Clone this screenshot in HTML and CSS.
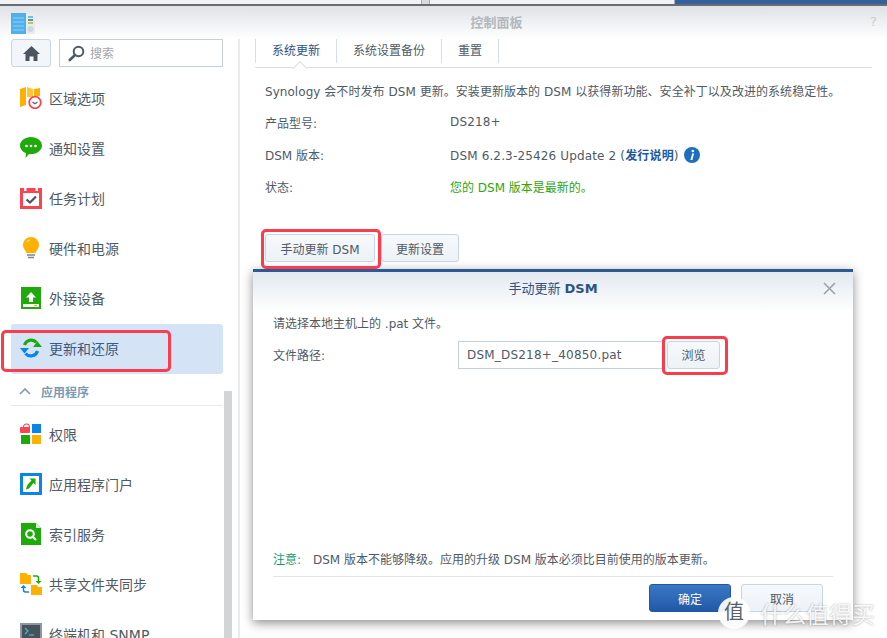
FILE: index.html
```html
<!DOCTYPE html>
<html lang="zh-CN">
<head>
    <meta charset="UTF-8">
    <title>控制面板</title>
    <link rel="stylesheet" href="styles.css">
</head>
<body>
    <div class="top-strip">
        <div class="strip-tab strip-a"></div>
        <div class="strip-tab strip-b"></div>
        <div class="strip-tab strip-c"></div>
        <div class="strip-blue"></div>
    </div>

    <header class="title-bar">
        <svg class="app-icon" width="24" height="24" viewBox="0 0 24 24">
            <rect x="0" y="1" width="15" height="21" fill="#4fb0ea"/>
            <rect x="15" y="1" width="9" height="21" fill="#e8ecef"/>
            <path d="M2 6h11M2 10h11M2 14h11M2 18h11" stroke="#8fd0f4" stroke-width="1"/>
            <path d="M17 5h5" stroke="#45b4e0" stroke-width="1.5"/>
            <path d="M17 8h5" stroke="#5c6670" stroke-width="1.5"/>
            <path d="M17 11h5" stroke="#8cc63f" stroke-width="1.5"/>
            <circle cx="19.500" cy="17" r="3" fill="#cfd6db"/>
        </svg>
        <span class="title-text">控制面板</span>
        <span class="help-mark">?</span>
    </header>

    <div class="window">
        <aside class="sidebar">
            <div class="search-row">
                <button class="home-btn">
                    <svg width="17" height="15" viewBox="0 0 17 15"><path d="M8.500 0 17 8h-2.500v7H10.500v-4.500h-4V15H2.500V8H0z" fill="#4a5560"/></svg>
                </button>
                <div class="search-box">
                    <svg width="17" height="17" viewBox="0 0 17 17"><circle cx="10.500" cy="6.500" r="4.800" fill="none" stroke="#4f5a65" stroke-width="2"/><path d="M7 10 1.800 15" stroke="#4f5a65" stroke-width="2.600" stroke-linecap="round"/></svg>
                    <span>搜索</span>
                </div>
            </div>

            <ul class="nav">
                <li class="nav-item">
                    <svg class="nav-icon" viewBox="0 0 22 22"><path d="M0 2 6 0v18l-6 2z" fill="#ffb000"/><path d="M7 0l6 2v8H7z" fill="#ffc43a"/><path d="M14 2l6-1v8h-6z" fill="#ffb000"/><circle cx="15" cy="15.500" r="5.800" fill="#fff" stroke="#f9454f" stroke-width="1.800"/><path d="M12.500 15l2.500 1.800 2.500-1.800" fill="none" stroke="#555f69" stroke-width="1.100"/></svg>
                    区域选项
                </li>
                <li class="nav-item">
                    <svg class="nav-icon" viewBox="0 0 22 22"><path d="M11 0c6 0 11 3.800 11 8.600 0 4.800-5 8.600-11 8.600l-2-.1L5.500 21l.5-4.700C2.400 14.900 0 12 0 8.600 0 3.800 5 0 11 0z" fill="#1eaa0a"/><circle cx="6.500" cy="9" r="1.300" fill="#fff"/><circle cx="11" cy="9" r="1.300" fill="#fff"/><circle cx="15.500" cy="9" r="1.300" fill="#fff"/></svg>
                    通知设置
                </li>
                <li class="nav-item">
                    <svg class="nav-icon" viewBox="0 0 22 22"><rect x="0" y="1" width="22" height="21" fill="#f9454f"/><rect x="3" y="6" width="16" height="13" fill="#fff"/><rect x="4" y="0" width="2.500" height="4" fill="#fff"/><rect x="15.500" y="0" width="2.500" height="4" fill="#fff"/><path d="M6.500 12.500 10 15.500 16 9.500" fill="none" stroke="#4a5560" stroke-width="2.200"/></svg>
                    任务计划
                </li>
                <li class="nav-item">
                    <svg class="nav-icon" viewBox="0 0 22 22"><path d="M11 0a8 8 0 0 1 8 8c0 3.500-2.500 5-3.500 8h-9C5.500 13 3 11.500 3 8a8 8 0 0 1 8-8z" fill="#ffb000"/><path d="M7 5a5 5 0 0 1 3-2" fill="none" stroke="#ffe08a" stroke-width="1.500"/><path d="M7 18h8M8 20.500h6" stroke="#7a848e" stroke-width="1.300"/></svg>
                    硬件和电源
                </li>
                <li class="nav-item">
                    <svg class="nav-icon" viewBox="0 0 22 22"><rect x="1" y="0" width="20" height="22" fill="#1eaa0a"/><path d="M11 5l5 5.500h-3V15H9v-4.500H6z" fill="#fff"/><rect x="3" y="17" width="16" height="3" fill="#fff"/><rect x="14" y="18" width="3" height="1" fill="#ffb000"/></svg>
                    外接设备
                </li>
                <li class="nav-item active">
                    <svg class="nav-icon" viewBox="0 0 22 22"><path d="M4.500 8A7 7 0 0 1 16.500 5.500" fill="none" stroke="#1eaa0a" stroke-width="3.200"/><path d="M13 10h9l-4.500-5.500z" fill="#1eaa0a"/><path d="M17.500 14A7 7 0 0 1 5.500 16.500" fill="none" stroke="#0a84e6" stroke-width="3.200"/><path d="M0 11h9l-4.500 5.500z" fill="#0a84e6"/></svg>
                    更新和还原
                </li>
            </ul>

            <div class="nav-group">
                <svg width="12" height="7" viewBox="0 0 12 7"><path d="M1 6l5-5 5 5" fill="none" stroke="#7a9ab5" stroke-width="1.600"/></svg>
                <span>应用程序</span>
            </div>

            <ul class="nav nav-apps">
                <li class="nav-item">
                    <svg class="nav-icon" viewBox="0 0 22 22"><path d="M3 4a3.500 3.500 0 0 1 7 0v1h-1V4a2.500 2.500 0 0 0-5 0v1H3z" fill="#f9454f"/><rect x="0" y="4" width="10" height="6" rx="1" fill="#f9454f"/><rect x="12" y="1" width="9" height="9" fill="#0a84e6"/><rect x="1" y="12" width="9" height="9" fill="#1eaa0a"/><rect x="12" y="12" width="9" height="9" fill="#ffb000"/></svg>
                    权限
                </li>
                <li class="nav-item">
                    <svg class="nav-icon" viewBox="0 0 22 22"><rect x="0" y="0" width="22" height="22" fill="#0a84e6"/><rect x="3" y="3" width="16" height="16" fill="#fff"/><path d="M15.500 5.500v6.500L13.500 10 9 15.500l-3 1c1-5 3-6.500 5.500-9l-2-2z" fill="#1eaa0a"/></svg>
                    应用程序门户
                </li>
                <li class="nav-item">
                    <svg class="nav-icon" viewBox="0 0 22 22"><path d="M1 0h15l5 5v17H1z" fill="#1eaa0a"/><path d="M16 0l5 5h-5z" fill="#d8f0d4"/><circle cx="10" cy="11" r="3.800" fill="none" stroke="#fff" stroke-width="2"/><path d="M13 14l3 3" stroke="#fff" stroke-width="2.200"/></svg>
                    索引服务
                </li>
                <li class="nav-item">
                    <svg class="nav-icon" viewBox="0 0 22 22"><path d="M0 0h6l2 2h3v9H0z" fill="#ffb000"/><path d="M11 12h6l1 2h4v8H11z" fill="#ffb000"/><path d="M13 3h3.500a2 2 0 0 1 2 2v3" fill="none" stroke="#1eaa0a" stroke-width="1.500"/><path d="M15.500 8h6l-3 3z" fill="#1eaa0a"/><path d="M9 19H5.500a2 2 0 0 1-2-2v-2" fill="none" stroke="#0a84e6" stroke-width="1.500"/><path d="M.5 15h6l-3-3z" fill="#0a84e6"/></svg>
                    共享文件夹同步
                </li>
                <li class="nav-item">
                    <svg class="nav-icon" viewBox="0 0 22 22"><rect x="0" y="0" width="22" height="22" fill="#8d97a0"/><rect x="2" y="2" width="18" height="18" fill="#47525c"/><path d="M5 5l3 3-3 3" fill="none" stroke="#2ec4c4" stroke-width="1.200"/><path d="M9 12h5" stroke="#2ec4c4" stroke-width="1.200"/></svg>
                    终端机和 SNMP
                </li>
            </ul>
            <div class="scroll-thumb"></div>
        </aside>

        <main class="content">
            <nav class="tabs">
                <a class="tab current">系统更新</a>
                <a class="tab">系统设置备份</a>
                <a class="tab">重置</a>
            </nav>

            <p class="intro">Synology 会不时发布 DSM 更新。安装更新版本的 DSM 以获得新功能、安全补丁以及改进的系统稳定性。</p>

            <div class="info-row"><span>产品型号:</span><span class="value">DS218+</span></div>
            <div class="info-row">
                <span>DSM 版本:</span>
                <span class="value">DSM 6.2.3-25426 Update 2 (<a class="notes-link">发行说明</a>)
                    <svg class="info-icon" width="16" height="16" viewBox="0 0 16 16"><circle cx="8" cy="8" r="8" fill="#1f6fc0"/><circle cx="8.800" cy="4" r="1.300" fill="#fff"/><path d="M9.200 6.500 7.600 12h1" fill="none" stroke="#fff" stroke-width="1.800"/></svg>
                </span>
            </div>
            <div class="info-row"><span>状态:</span><span class="ok-text">您的 DSM 版本是最新的。</span></div>

            <div class="actions">
                <button class="btn btn-manual">手动更新 DSM</button>
                <button class="btn btn-settings">更新设置</button>
            </div>
        </main>
    </div>

    <section class="dialog">
        <div class="dialog-head">
            <span>手动更新 <b>DSM</b></span>
            <svg class="dialog-close" width="13" height="13" viewBox="0 0 13 13"><path d="M1 1l11 11M12 1 1 12" stroke="#9aa3ab" stroke-width="1.600"/></svg>
        </div>
        <div class="dialog-body">
            <p class="dialog-hint">请选择本地主机上的 .pat 文件。</p>
            <div class="file-row">
                <label>文件路径:</label>
                <div class="file-input">DSM_DS218+_40850.pat</div>
                <button class="btn btn-browse">浏览</button>
            </div>
            <p class="dialog-note"><span class="note-label">注意:</span>DSM 版本不能够降级。应用的升级 DSM 版本必须比目前使用的版本更新。</p>
        </div>
        <div class="dialog-foot">
            <button class="btn btn-primary">确定</button>
            <button class="btn btn-cancel">取消</button>
        </div>
    </section>

    <div class="mark mark-nav"></div>
    <div class="mark mark-manual"></div>
    <div class="mark mark-browse"></div>

    <div class="watermark">
        <span class="wm-circle">值</span>
        <span class="wm-text">什么值得买</span>
    </div>
</body>
</html>
```

FILE: styles.css
```css
* {
    box-sizing: border-box;
}

html, body {
    height: 100%;
}

body {
    margin: 0;
    height: 638px;
    overflow: hidden;
    position: relative;
    background: #fff;
    color: #505a64;
    font-family: "DejaVu Sans", "Noto Sans CJK SC", sans-serif;
    font-size: 12px;
}

ul {
    list-style: none;
    margin: 0;
    padding: 0;
}

p {
    margin: 0;
}

/* strip of the window behind */
.top-strip {
    display: flex;
    height: 6px;
    background: #e6e8ea;
    border-bottom: 2px solid #676d73;
}

.strip-tab {
    height: 4px;
    background: #f1f2f3;
    border-right: 1px solid #a8adb2;
}

.strip-a {
    width: 422px;
}

.strip-b {
    width: 8px;
    background: #d8dadc;
}

.strip-c {
    width: 245px;
}

.strip-blue {
    flex: 1;
    height: 4px;
    background: #34609c;
}

.title-bar {
    display: flex;
    align-items: center;
    justify-content: center;
    position: relative;
    height: 33px;
    padding: 0 0 2px 106px;
    background: linear-gradient(#dfe2e6, #fff);
}

.app-icon {
    position: absolute;
    left: 11px;
    top: 6px;
}

.title-text {
    font-size: 13px;
    font-weight: 700;
    color: #b3b8bd;
}

.help-mark {
    position: absolute;
    right: 10px;
    top: 8px;
    font-size: 13px;
    color: #c9cdd1;
}

.window {
    display: flex;
    height: 599px;
}

.sidebar {
    position: relative;
    flex: none;
    width: 240px;
    padding-left: 11px;
    padding-right: 15px;
    border-right: 2px solid #e8eaec;
}

.search-row {
    display: flex;
    gap: 8px;
    height: 35px;
}

.home-btn {
    display: flex;
    align-items: center;
    justify-content: center;
    width: 40px;
    height: 28px;
    padding: 0;
    border: 1px solid #c8d5e2;
    border-radius: 3px;
    background: #f2f6fa;
}

.search-box {
    display: flex;
    align-items: center;
    gap: 5px;
    width: 164px;
    height: 28px;
    padding-left: 8px;
    border: 1px solid #c4d0dc;
    color: #a0a7ae;
}

.search-box span {
    padding-bottom: 2px;
}

.nav-item {
    display: flex;
    align-items: center;
    gap: 7px;
    height: 50px;
    padding: 0 0 2px 9px;
    font-size: 14px;
}

.nav-icon {
    flex: none;
    width: 22px;
    height: 22px;
}

.nav-item.active {
    background: #d4e4f6;
    border-radius: 3px;
    color: #3d5a80;
}

.nav-group {
    display: flex;
    align-items: center;
    gap: 10px;
    height: 32px;
    padding: 3px 0 0 8px;
    border-bottom: 1px solid #e6e8ea;
    color: #7a9ab5;
    font-weight: 700;
}

.nav-apps {
    padding-top: 4px;
}

.scroll-thumb {
    position: absolute;
    left: 224px;
    top: 352px;
    width: 8px;
    height: 260px;
    background: #d2d4d6;
}

.content {
    flex: 1;
    padding: 0 15px;
}

.tabs {
    display: flex;
    position: relative;
    height: 29px;
    border-bottom: 1px solid #dcdfe2;
}

.tabs::after {
    content: "";
    position: absolute;
    left: 40px;
    top: 24px;
    width: 9px;
    height: 9px;
    background: #fff;
    border-left: 1px solid #dcdfe2;
    border-top: 1px solid #dcdfe2;
    transform: rotate(45deg);
}

.tab {
    height: 24px;
    padding: 0 16px;
    line-height: 24px;
    border-right: 1px solid #d5dfe9;
}

.tab:first-child {
    border-left: 1px solid #d5dfe9;
}

.tab.current {
    color: #2d5285;
}

.intro {
    margin: 15px 0 0 10px;
    line-height: 18px;
    letter-spacing: 0.05px;
}

.info-row {
    display: grid;
    grid-template-columns: 185px 1fr;
    height: 32px;
    margin-left: 10px;
    align-items: center;
}

.intro + .info-row {
    margin-top: 5px;
}

.value {
    letter-spacing: 0.15px;
}

.notes-link {
    color: #1f5aa0;
    font-weight: 700;
}

.info-icon {
    vertical-align: -3px;
    margin-left: 1px;
}

.ok-text {
    color: #2fa50f;
}

.actions {
    display: flex;
    gap: 6px;
    margin: 32px 0 0 10px;
}

.btn {
    height: 28px;
    padding: 0;
    border: 1px solid #c8d5e2;
    border-radius: 3px;
    background: linear-gradient(#f6f9fc, #edf2f7);
    color: #505a64;
    font: inherit;
}

.btn-manual {
    width: 110px;
}

.btn-settings {
    width: 78px;
}

.dialog {
    position: absolute;
    left: 253px;
    top: 269px;
    width: 600px;
    height: 351px;
    display: flex;
    flex-direction: column;
    background: #fff;
    border-top: 3px solid #2b5a94;
    box-shadow: 0 3px 10px rgba(0, 0, 0, 0.45);
}

.dialog-head {
    display: flex;
    flex: none;
    align-items: center;
    justify-content: center;
    position: relative;
    height: 40px;
    padding-bottom: 10px;
    font-size: 13px;
    color: #2d5285;
    background: linear-gradient(#e3e9f0, #fff);
}

.dialog-close {
    position: absolute;
    right: 17px;
    top: 10px;
}

.dialog-body {
    flex: 1;
    display: flex;
    flex-direction: column;
    padding: 3px 20px 0;
}

.dialog-hint {
    line-height: 18px;
}

.file-row {
    display: flex;
    align-items: center;
    margin-top: 8px;
}

.file-row label {
    width: 185px;
    padding-bottom: 2px;
}

.file-input {
    width: 205px;
    height: 28px;
    padding-left: 8px;
    line-height: 26px;
    letter-spacing: 0.2px;
    border: 1px solid #c4d0dc;
}

.btn-browse {
    width: 53px;
    margin-left: 4px;
    padding-bottom: 1px;
}

.dialog-note {
    margin-top: auto;
    padding-bottom: 3px;
    line-height: 18px;
}

.note-label {
    display: inline-block;
    width: 40px;
    color: #0d9b6c;
}

.dialog-foot {
    display: flex;
    flex: none;
    justify-content: flex-end;
    gap: 10px;
    height: 44px;
    margin: 4px 20px 0;
    padding: 7px 10px 0 0;
    border-top: 1px solid #e2e4e6;
}

.btn-primary {
    width: 82px;
    border-color: #1f5aa0;
    background: linear-gradient(#3a79c4, #2158a8);
    color: #fff;
}

.btn-cancel {
    width: 82px;
}

/* red annotations drawn on the screenshot */
.mark {
    position: absolute;
    border: 3px solid #fa3c4c;
    border-radius: 5px;
}

.mark-nav {
    left: 1px;
    top: 330px;
    width: 170px;
    height: 42px;
}

.mark-manual {
    left: 261px;
    top: 229px;
    width: 120px;
    height: 40px;
}

.mark-browse {
    left: 662px;
    top: 336px;
    width: 66px;
    height: 39px;
}

.watermark {
    position: absolute;
    left: 718px;
    top: 596px;
    display: flex;
    align-items: center;
    gap: 10px;
    color: rgba(255, 255, 255, 0.9);
}

.wm-circle {
    width: 32px;
    height: 32px;
    border-radius: 50%;
    background: rgba(255, 255, 255, 0.92);
    color: #5a6066;
    font-size: 20px;
    line-height: 30px;
    text-align: center;
}

.wm-text {
    font-size: 23px;
    text-shadow: 0 0 2px rgba(0, 0, 0, 0.35);
}
```
